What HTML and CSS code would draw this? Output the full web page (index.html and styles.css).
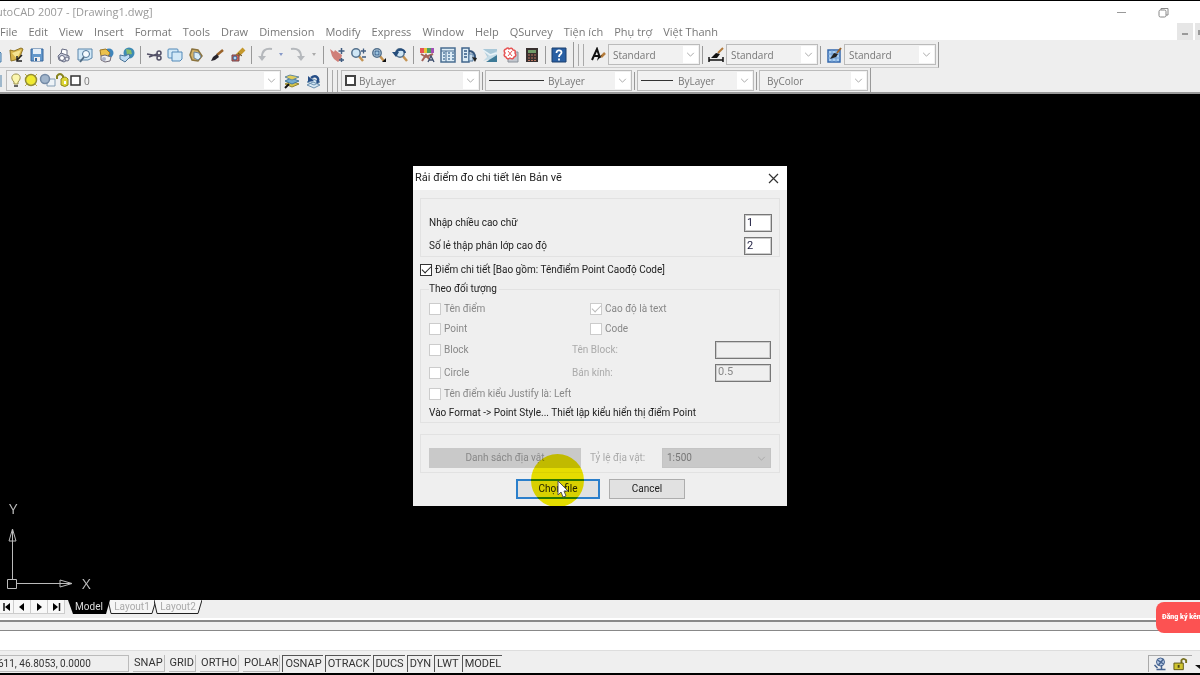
FILE: index.html
```html
<!DOCTYPE html>
<html lang="vi">
<head>
<meta charset="utf-8">
<title>AutoCAD 2007 - [Drawing1.dwg]</title>
<link rel="stylesheet" href="styles.css">
</head>
<body>
<svg class="defs" aria-hidden="true">
  <defs>
    <symbol id="chev" viewBox="0 0 10 6"><path d="M1 1l4 4 4-4" fill="none" stroke="#aaa" stroke-width="1.2"/></symbol>
    <symbol id="mag" viewBox="0 0 16 16"><path d="M8 8l5 6" stroke="#c49352" stroke-width="2.5"/><circle cx="6" cy="6" r="4.2" fill="#cfe6f5" stroke="#53708c" stroke-width="1.5"/></symbol>
  </defs>
</svg>
<header class="titlebar">
  <h1 class="app-title">AutoCAD 2007 - [Drawing1.dwg]</h1>
  <div class="win-controls">
    <button class="plain" aria-label="Minimize"><svg width="10" height="12" viewBox="0 0 10 12"><path d="M0 6.500h9" stroke="#999"/></svg></button>
    <button class="plain" aria-label="Restore"><svg width="11" height="11" viewBox="0 0 11 11" fill="none" stroke="#888"><rect x="1" y="3" width="7" height="7" rx="1.500"/><path d="M3 3V1.500h7V8H8"/></svg></button>
  </div>
</header>
<div class="menubar">
  <nav class="menu">
    <a href="#">File</a><a href="#">Edit</a><a href="#">View</a><a href="#">Insert</a><a href="#">Format</a><a href="#">Tools</a><a href="#">Draw</a><a href="#">Dimension</a><a href="#">Modify</a><a href="#">Express</a><a href="#">Window</a><a href="#">Help</a><a href="#">QSurvey</a><a href="#">Tiện ích</a><a href="#">Phụ trợ</a><a href="#">Việt Thanh</a>
  </nav>
  <div class="doc-controls">
    <button class="doc-btn" aria-label="Minimize drawing"><svg width="6" height="8"><rect width="6" height="2" y="5" fill="#999"/></svg></button>
    <button class="doc-btn cut" aria-label="Restore drawing"><svg width="6" height="8"><rect x="3" y="2" width="3" height="5" fill="#999"/></svg></button>
  </div>
</div>
<div class="toolbars">
  <div class="row">
    <div class="bar first">
      <button class="tool" aria-label="New"><svg viewBox="0 0 16 16"><path d="M2 3h9l3 3v9H2z" fill="#b9d9f2" stroke="#467aa8"/></svg></button>
      <button class="tool" aria-label="Open"><svg viewBox="0 0 16 16"><path d="M2 3l4 1 7-3 2 1-4 10-8 2z" fill="#d8b54b" stroke="#8f7325"/><path d="M4 6l9-3-4 9z" fill="#f5e391"/><path d="M9 13l5-5M9 9v5h5" stroke="#222" stroke-width="1.500" fill="none"/></svg></button>
      <button class="tool" aria-label="Save"><svg viewBox="0 0 16 16"><path d="M2 2h12v12H2z" fill="#6297cb" stroke="#35659b"/><path d="M4 2h8v5H4z" fill="#e5eff8"/><path d="M5 10h6v4H5z" fill="#eee"/><path d="M6 11h2v3H6z" fill="#35659b"/></svg></button>
      <span class="sep"></span>
      <button class="tool" aria-label="Plot"><svg viewBox="0 0 16 16" stroke="#676c83"><path d="M5 7l1-5 5 1v5" fill="#fff"/><path d="M2 9l3-3 8 3v3l-5 3-5-2z" fill="#cbcfdd"/><circle cx="6" cy="11" r="2.500" fill="#fff"/><circle cx="11" cy="12" r="2" fill="#e7e9f0"/></svg></button>
      <button class="tool" aria-label="Plot preview"><svg viewBox="0 0 16 16"><path d="M1 2h14v9l-4 2H1z" fill="#d2e9f8" stroke="#5b86ab"/><circle cx="9" cy="7" r="3.500" fill="#f5fbff" stroke="#4b7396"/><path d="M7 10l-4 5" stroke="#526d85" stroke-width="2"/></svg></button>
      <button class="tool" aria-label="Publish"><svg viewBox="0 0 16 16"><circle cx="11" cy="6" r="4.500" fill="#3f84ba"/><path d="M2 3l6-1 4 4-3 5-6-2z" fill="#ecc14c" stroke="#9c7725"/><path d="M3 9l4-1 6 2-1 4-5 1-4-2z" fill="#eee" stroke="#716b78"/><circle cx="6" cy="12" r="2" fill="#aab2c9"/></svg></button>
      <button class="tool" aria-label="Web"><svg viewBox="0 0 16 16"><circle cx="10" cy="6" r="5.500" fill="#3d8ab4"/><path d="M7 2l5 1 1 4-5 1z" fill="#88bb6a"/><path d="M1 8l5 1 4-2 1 3-5 5-5-3z" fill="#bcdaf2" stroke="#4b7396"/></svg></button>
      <span class="sep"></span>
      <button class="tool" aria-label="Cut"><svg viewBox="0 0 16 16" fill="none" stroke="#525066" stroke-width="1.500"><path d="M1 7l11 2M3 10l8-3"/><circle cx="13" cy="6" r="2"/><circle cx="13" cy="11" r="2"/></svg></button>
      <button class="tool" aria-label="Copy"><svg viewBox="0 0 16 16" fill="#d3e9f7" stroke="#5289b8"><rect x="1" y="2" width="10" height="9" rx="1"/><path d="M5 5h10v7l-2 2H5z"/></svg></button>
      <button class="tool" aria-label="Paste"><svg viewBox="0 0 16 16"><path d="M4 2l6 1 4 6-4 5-6-1-2-5z" fill="#d4b36a" stroke="#8b733e" stroke-width="1.500"/><path d="M6 5l5 1 2 4-3 3-4-2z" fill="#d8edfa" stroke="#6a839b"/></svg></button>
      <button class="tool" aria-label="Match properties"><svg viewBox="0 0 16 16"><path d="M8 8l6-5" stroke="#9a632a" stroke-width="2.500"/><path d="M2 14l2-4 4-3 2 3-4 3z" fill="#26232b"/></svg></button>
      <button class="tool" aria-label="Block editor"><svg viewBox="0 0 16 16"><path d="M7 9l7-7" stroke="#c5982c" stroke-width="4"/><path d="M8 6l4 3" stroke="#5c4a26"/><path d="M2 8h7v6H2z" fill="#dc6650" stroke="#70424b"/><circle cx="5" cy="11" r="2" fill="#b4d5ef" stroke="#315b91"/></svg></button>
      <span class="sep"></span>
      <button class="tool" aria-label="Undo"><svg viewBox="0 0 16 16"><path d="M15 2C8 1 5 4 5 10" fill="none" stroke="#b5b8bc" stroke-width="2"/><path d="M1 9h8l-4 5z" fill="#b5b8bc"/></svg></button>
      <button class="drop" aria-label="Undo list"><svg width="4" height="3"><path d="M0 0h4L2 3z" fill="#8799c9"/></svg></button>
      <button class="tool" aria-label="Redo"><svg viewBox="0 0 16 16"><path d="M1 2c7-1 10 2 10 8" fill="none" stroke="#b5b8bc" stroke-width="2"/><path d="M7 9h8l-4 5z" fill="#b5b8bc"/></svg></button>
      <button class="drop" aria-label="Redo list"><svg width="4" height="3"><path d="M0 0h4L2 3z" fill="#aaa"/></svg></button>
      <span class="sep"></span>
      <button class="tool" aria-label="Pan"><svg viewBox="0 0 16 16"><path d="M1 2l4 3 1-2 4 3 3 2-1 4-3 3-4-3-2-3z" fill="#cf7f79"/><path d="M12.500 1v6M9.500 4h6M12.500 11v4M10 13h5" stroke="#405c80" stroke-width="1.500"/></svg></button>
      <button class="tool" aria-label="Zoom realtime"><svg viewBox="0 0 16 16"><use href="#mag"/><path d="M11 4h5M13.500 1.500v5M12 10h4" stroke="#405c80" stroke-width="1.300"/></svg></button>
      <button class="tool" aria-label="Zoom window"><svg viewBox="0 0 16 16"><use href="#mag"/><path d="M4 4h4v4H4z" fill="#9bc4e0" stroke="#355b86"/><path d="M15 11v4h-4z" fill="#111"/></svg></button>
      <button class="tool" aria-label="Zoom previous"><svg viewBox="0 0 16 16"><use href="#mag" x="2"/><path d="M4 7c1-6 9-5 9-1" fill="none" stroke="#254d7c" stroke-width="2"/><path d="M0 5h7l-3 5z" fill="#254d7c"/></svg></button>
      <span class="sep"></span>
      <button class="tool" aria-label="Properties"><svg viewBox="0 0 16 16"><path d="M1 1h4v5H1z" fill="#e65454"/><path d="M5 1h3v5H5z" fill="#e7c735"/><path d="M8 1h4v5H8z" fill="#4fa064"/><path d="M12 1h3v5h-3z" fill="#a34fb5"/><path d="M2 7l5 3 7-3M3 14l4-6 3 4" fill="none" stroke="#a5645a" stroke-width="2"/><path d="M9 15l3-6 3 6M10 13h4" fill="none" stroke="#3c4d6d" stroke-width="1.300"/></svg></button>
      <button class="tool" aria-label="DesignCenter"><svg viewBox="0 0 16 16"><path d="M1 1h14v14H1z" fill="#dcecf6" stroke="#496d91" stroke-width="1.500"/><path d="M1 4h14M6 4v11" stroke="#496d91"/><path d="M3 6h2M3 9h2M3 12h2M8 6h2M12 6h2M8 9h2M12 9h2M8 12h2M12 12h2" stroke="#557da3" stroke-width="1.500"/></svg></button>
      <button class="tool" aria-label="Tool palettes"><svg viewBox="0 0 16 16"><path d="M1 1h7v14H1z" fill="#dcecf6" stroke="#41658c" stroke-width="1.500"/><path d="M3 4h3M3 7h3M3 10h3" stroke="#355b86" stroke-width="1.500"/><path d="M8 4c5 0 6 3 6 7" fill="none" stroke="#35567c" stroke-width="2"/><path d="M8 7h4v7H8z" fill="#c9dcec" stroke="#557da3"/><path d="M11 10l5 1-2 4z" fill="#222"/></svg></button>
      <button class="tool" aria-label="Sheet set"><svg viewBox="0 0 16 16"><path d="M1 2h14v13H8z" fill="#a9c8d8"/><path d="M1 3l8 4 6-3v6l-7 2-7 2 5-5z" fill="#c5dce7"/><path d="M1 3l7 5 7-2" fill="none" stroke="#e9f3f8" stroke-width="1.500"/><path d="M4 15l11-7v7z" fill="#3d7a97"/></svg></button>
      <button class="tool" aria-label="Markup"><svg viewBox="0 0 16 16"><path d="M5 5h10v10H5z" fill="#c2c7cf" stroke="#8b929b"/><path d="M3 2q2-2 3 0 3-2 4 1 3 0 2 3 2 3-1 4-1 3-4 1-3 2-4-1-3-1-1-4-2-3 1-4z" fill="#fff" stroke="#e65555" stroke-width="1.500"/><path d="M5 4l4 5M9 4L5 9" stroke="#e65555"/></svg></button>
      <button class="tool" aria-label="Calculator"><svg viewBox="0 0 16 16"><path d="M2 1h12v14H2z" fill="#38302f"/><path d="M4 3h8v3H4z" fill="#719b69"/><path d="M4 8h8M4 11h8M4 13.500h8" stroke="#b97560" stroke-dasharray="2 1"/></svg></button>
      <span class="sep"></span>
      <button class="tool" aria-label="Help"><svg viewBox="0 0 16 16"><path d="M1 1h14v14H1z" fill="#295fa3" stroke="#1c416f"/><path d="M5.500 6c0-4 5-3 5-.5C10.500 7.500 8 7 8 10M8 11.500v2" fill="none" stroke="#fff" stroke-width="1.800"/></svg></button>
    </div>
    <div class="bar styles">
      <span class="grip"></span>
      <button class="tool" aria-label="Text style"><svg viewBox="0 0 16 16"><path d="M2 13L7 2l3 9M4 9h6" fill="none" stroke="#111" stroke-width="2"/><path d="M15 6l-4 4" stroke="#b37a3a" stroke-width="2.500"/><path d="M12 8l-5 6 1-4z" fill="#111"/></svg></button>
      <span class="combo std"><select aria-label="Text style"><option>Standard</option></select><svg class="arrow"><use href="#chev"/></svg></span>
      <span class="sep"></span>
      <button class="tool" aria-label="Dimension style"><svg viewBox="0 0 16 16"><path d="M1 10v5M15 10v5M1 13h14" stroke="#111" stroke-width="1.500"/><path d="M10 6l5-5" stroke="#b37a3a" stroke-width="2"/><path d="M3 11l5-5 4 1-3 4z" fill="#111"/></svg></button>
      <span class="combo std"><select aria-label="Dimension style"><option>Standard</option></select><svg class="arrow"><use href="#chev"/></svg></span>
      <span class="sep"></span>
      <button class="tool" aria-label="Table style"><svg viewBox="0 0 16 16"><path d="M2 3h12v12H2z" fill="#a9cdf0" stroke="#3468ad" stroke-width="1.500"/><path d="M2 7h12M2 11h12M6 3v12M10 3v12" stroke="#6f9cd2"/><path d="M11 6l4-5" stroke="#9a632a" stroke-width="2"/><path d="M4 12l4-6 4 1-2 3z" fill="#222"/></svg></button>
      <span class="combo std"><select aria-label="Table style"><option>Standard</option></select><svg class="arrow"><use href="#chev"/></svg></span>
    </div>
  </div>
  <div class="row">
    <div class="bar layers">
      <span class="edge"></span>
      <span class="combo layer">
        <select aria-label="Layer"><option>0</option></select>
        <svg class="layer-icons" viewBox="0 0 72 16">
          <path d="M5 10C1 6 3 2 7 2s6 4 2 8v2H5z" fill="#fbf6ae" stroke="#9b914c"/><path d="M5 14h4" stroke="#666" stroke-width="2"/>
          <circle cx="22" cy="8" r="5.500" fill="#f0ea31" stroke="#938d38" stroke-width="1.500"/><path d="M16 2l2 2M28 2l-2 2M16 14l2-2M28 14l-2-2" stroke="#b8ae45"/>
          <path d="M38 7h8v7h-8z" fill="#eef3f7" stroke="#849db4"/><circle cx="36" cy="7" r="4.500" fill="#a1b5cb" stroke="#748aa5" stroke-width="1.500"/>
          <path d="M48 7V4q3-4 6 0v4" fill="none" stroke="#87831e" stroke-width="2"/><path d="M52 7q4-4 7 0v6q-3 3-7 0z" fill="#ded735" stroke="#8d871f"/><path d="M55 9h2v3h-2z" fill="#fff"/>
          <path d="M62 4h9v9h-9z" fill="#fff" stroke="#333" stroke-width="1.500"/>
        </svg>
        <svg class="arrow"><use href="#chev"/></svg>
      </span>
      <button class="tool" aria-label="Layer properties"><svg viewBox="0 0 16 16"><path d="M1 11l6-3 8 3-7 3z" fill="#d6c449" stroke="#918331"/><path d="M1 8l6-3 8 3-7 3z" fill="#73abd0" stroke="#467a9e"/><path d="M1 4l5-2 9 2-7 3z" fill="#e1cd58" stroke="#648aa3"/><path d="M1 15l4-4" stroke="#111" stroke-width="2"/></svg></button>
      <button class="tool" aria-label="Layer previous"><svg viewBox="0 0 16 16"><path d="M2 12l6-3 7 3-6 3zM2 9l6-3 7 3-6 3z" fill="#d6e8f5" stroke="#6d91b0"/><path d="M12 10c3-5-1-9-6-5" fill="none" stroke="#254d86" stroke-width="2.500"/><path d="M3 3v6l6-1z" fill="#254d86"/></svg></button>
    </div>
    <div class="bar props">
      <span class="grip"></span>
      <span class="combo color"><select aria-label="Color"><option>ByLayer</option></select><i class="swatch"></i><svg class="arrow"><use href="#chev"/></svg></span>
      <span class="sep"></span>
      <span class="combo ltype"><select aria-label="Linetype"><option>ByLayer</option></select><i class="line"></i><svg class="arrow"><use href="#chev"/></svg></span>
      <span class="sep"></span>
      <span class="combo lweight"><select aria-label="Lineweight"><option>ByLayer</option></select><i class="line"></i><svg class="arrow"><use href="#chev"/></svg></span>
      <span class="sep"></span>
      <span class="combo plot"><select aria-label="Plot style"><option>ByColor</option></select><svg class="arrow"><use href="#chev"/></svg></span>
    </div>
  </div>
</div>
<main class="canvas">
  <svg class="ucs" width="100" height="102" viewBox="0 -6 100 102" fill="none" stroke="#bbb">
    <path d="M7.500 75.500h9v9h-9zM12.500 75V26M9 37l3.500-12L16 37zM17 79.500h54M60 76l12 3.500L60 83z"/>
    <path d="M12.500 30v6M62 79.500h6"/>
    <text x="9" y="10" class="axis">Y</text><text x="82" y="85" class="axis">X</text>
  </svg>
  <form class="dialog" role="dialog" aria-labelledby="dlg-title">
    <div class="dlg-head">
      <h2 id="dlg-title" class="dlg-title">Rải điểm đo chi tiết lên Bản vẽ</h2>
      <button type="button" class="plain" aria-label="Close"><svg width="11" height="11" viewBox="0 0 11 11"><path d="M1 1l9 9M10 1l-9 9" stroke="#333" stroke-width="1.200"/></svg></button>
    </div>
    <div class="dlg-body">
      <div class="group sizes">
        <div class="field"><label for="h">Nhập chiều cao chữ</label><input id="h" class="box short" value="1"></div>
        <div class="field"><label for="d">Số lẻ thập phân lớp cao độ</label><input id="d" class="box short" value="2"></div>
      </div>
      <label class="check main"><input type="checkbox" checked>Điểm chi tiết [Bao gồm: Tênđiểm Point Caođộ Code]</label>
      <fieldset class="group objects">
        <legend>Theo đối tượng</legend>
        <div class="options">
          <label class="check"><input type="checkbox" disabled>Tên điểm</label>
          <label class="check inset"><input type="checkbox" checked disabled>Cao độ là text</label>
          <label class="check"><input type="checkbox" disabled>Point</label>
          <label class="check inset"><input type="checkbox" disabled>Code</label>
          <label class="check"><input type="checkbox" disabled>Block</label>
          <div class="field off"><label for="b">Tên Block:</label><input id="b" class="box" disabled></div>
          <label class="check"><input type="checkbox" disabled>Circle</label>
          <div class="field off"><label for="r">Bán kính:</label><input id="r" class="box" value="0.5" disabled></div>
          <label class="check wide"><input type="checkbox" disabled>Tên điểm kiểu Justify là: Left</label>
          <p class="hint wide">Vào Format -&gt; Point Style... Thiết lập kiểu hiển thị điểm Point</p>
        </div>
      </fieldset>
      <div class="group features">
        <button type="button" class="btn list" disabled>Danh sách địa vật</button>
        <label class="ratio-label" for="ratio">Tỷ lệ địa vật:</label>
        <span class="combo ratio"><select id="ratio" disabled><option>1:500</option></select><svg class="arrow"><use href="#chev"/></svg></span>
      </div>
      <div class="actions">
        <span class="pointed">
          <button type="button" class="btn choose">Chọn file</button>
          <i class="halo"></i>
          <svg class="cursor" width="12" height="18" viewBox="0 0 12 18"><path d="M1 1v14l3-3 2 5 3-1-2-5h4z" fill="#fff" stroke="#555"/></svg>
        </span>
        <button type="button" class="btn cancel">Cancel</button>
      </div>
    </div>
  </form>
</main>
<footer class="bottom">
  <div class="tabs">
    <button class="nav" aria-label="First"><svg viewBox="0 0 10 10"><path d="M2 1v8" stroke="#111" stroke-width="1.500"/><path d="M8 1v8L3 5z"/></svg></button>
    <button class="nav" aria-label="Previous"><svg viewBox="0 0 10 10"><path d="M7 1v8L2 5z"/></svg></button>
    <button class="nav" aria-label="Next"><svg viewBox="0 0 10 10"><path d="M3 1v8l5-4z"/></svg></button>
    <button class="nav" aria-label="Last"><svg viewBox="0 0 10 10"><path d="M2 1v8l5-4z"/><path d="M8.500 1v8" stroke="#111" stroke-width="1.500"/></svg></button>
    <button class="tab model"><svg viewBox="0 0 42 14" preserveAspectRatio="none"><path d="M0 0h42l-4 14H5z" fill="#000"/></svg><span>Model</span></button>
    <button class="tab"><svg viewBox="0 0 48 14" preserveAspectRatio="none"><path d="M0 0l3 13.500h41L48 0" fill="#f6f6f6" stroke="#222"/></svg><span>Layout1</span></button>
    <button class="tab"><svg viewBox="0 0 48 14" preserveAspectRatio="none"><path d="M0 0l3 13.500h41L48 0" fill="#f6f6f6" stroke="#222"/></svg><span>Layout2</span></button>
  </div>
  <div class="splitter"></div>
  <input class="command" aria-label="Command line">
  <div class="status">
    <output class="coords">611, 46.8053, 0.0000</output>
    <div class="modes">
      <div class="mode-set"><button class="mode">SNAP</button><button class="mode">GRID</button><button class="mode">ORTHO</button><button class="mode">POLAR</button></div>
      <div class="mode-set on"><button class="mode">OSNAP</button><button class="mode">OTRACK</button><button class="mode">DUCS</button><button class="mode">DYN</button><button class="mode">LWT</button><button class="mode">MODEL</button></div>
    </div>
    <div class="tray">
      <svg viewBox="0 0 14 14"><circle cx="7" cy="5" r="4" fill="#b9cbe6" stroke="#45628f"/><path d="M4 3l6 4M10 2L5 8M8 8v4M3 12.500h9M1 8l3 3" stroke="#45628f" stroke-width="1.500"/></svg>
      <svg viewBox="0 0 16 14"><path d="M9 7V3q2-3 5 0v3" fill="none" stroke="#77701d" stroke-width="2"/><path d="M1 6h10v7H1z" fill="#cfc42f" stroke="#5d5716"/><path d="M5 8h2v3H5z" fill="#4b4614"/></svg>
    </div>
    <button class="plain more" aria-label="Status menu"><svg width="5" height="4"><path d="M0 0h5v4z" fill="#111"/></svg></button>
  </div>
  <div class="badge">Đăng ký kênh</div>
</footer>
</body>
</html>
```
FILE: styles.css
```css
* { box-sizing: border-box; }
body {
  margin: 0;
  min-height: 100vh;
  display: flex;
  flex-direction: column;
  overflow: hidden;
  background: #000;
  border-top: 1px solid #000;
  border-bottom: 2px solid #000;
  font: 11px/14px "Open Sans", "Noto Sans", sans-serif;
  color: #777;
}
button, input, select { font: inherit; color: inherit; margin: 0; padding: 0; border: 0; background: none; border-radius: 0; }
h1, h2, p { margin: 0; font-weight: normal; font-size: inherit; }
.defs { position: absolute; width: 0; height: 0; }
.plain { display: flex; }

.titlebar { display: flex; justify-content: space-between; align-items: center; height: 22px; background: #fff; white-space: nowrap; }
.app-title { margin-left: -11px; color: #999; }
.win-controls { display: flex; align-items: center; gap: 31px; padding-right: 31px; }
.menubar { display: flex; justify-content: space-between; height: 17px; background: #fff; }
.menu { display: flex; gap: 11px; align-items: center; white-space: nowrap; }
.menu a { color: inherit; text-decoration: none; }
.doc-controls { display: flex; gap: 2px; }
.doc-btn { display: flex; justify-content: center; align-items: center; width: 16px; background: #e6e6e6; }
.doc-btn.cut { width: 5px; }

.toolbars { background: #eee; height: 54px; padding-top: 2px; border-bottom: 2px solid #999; overflow: hidden; }
.row { display: flex; height: 26px; }
.bar { display: flex; align-items: center; border-right: 1px solid #999; border-bottom: 1px solid #ccc; flex: none; }
.bar.first { margin-left: -16px; padding-right: 4px; }
.bar.styles, .bar.props { padding-right: 2px; }
.tool { flex: none; display: flex; justify-content: center; width: 21px; }
.tool svg { width: 16px; height: 16px; }
.drop { flex: none; display: flex; justify-content: center; width: 12px; }
.sep { flex: none; width: 6px; height: 18px; background: linear-gradient(#999, #999) center / 1px 100% no-repeat; }
.styles .sep, .props .sep { width: 5px; }
.grip { flex: none; width: 6px; height: 22px; margin: 0 3px 0 4px; border: 1px solid #aaa; border-width: 0 1px; }
.edge { width: 2px; height: 12px; margin-right: 4px; background: #9fb8cc; }
.layers { padding-right: 4px; }

.combo { position: relative; display: flex; height: 21px; flex: none; }
.combo select { appearance: none; width: 100%; height: 100%; padding: 0 4px; border: 1px solid #bbb; background: #f1f1f1; font-size: 10px; opacity: 1; }
.arrow { position: absolute; top: 2px; bottom: 2px; right: 2px; width: 15px; height: 17px; padding: 6px 3px; background: #fff; pointer-events: none; }
.combo.std { width: 92px; }
.combo.layer { width: 275px; }
.combo.layer select { padding-left: 77px; }
.layer-icons { position: absolute; left: 3px; top: 2px; width: 72px; height: 16px; pointer-events: none; }
.combo.color { width: 139px; }
.combo.color select { padding-left: 17px; }
.swatch { position: absolute; left: 4px; top: 5px; width: 11px; height: 11px; border: 2px solid #444; background: #fff; }
.line { position: absolute; top: 10px; left: 4px; height: 1px; background: #333; }
.combo.ltype { width: 147px; }
.combo.ltype select { padding-left: 62px; }
.ltype .line { width: 55px; }
.combo.lweight { width: 117px; }
.combo.lweight select { padding-left: 40px; }
.lweight .line { width: 32px; }
.combo.plot { width: 109px; }
.combo.plot select { padding-left: 7px; }

.canvas { position: relative; flex: 1; display: grid; place-items: center; padding-bottom: 22px; background: #000; }
.ucs { position: absolute; left: 0; bottom: 0; }
.axis { font-size: 15px; fill: #bbb; stroke: none; }

.dialog { position: relative; width: 374px; background: #efefef; color: #222; font: 10px/14px Roboto, "Noto Sans", sans-serif; white-space: nowrap; overflow: hidden; }
.dlg-head { display: flex; justify-content: space-between; align-items: center; height: 24px; padding: 0 8px 0 2px; background: #fff; }
.dlg-title { font-size: 11px; }
.dlg-body { padding: 8px 7px 7px; }
.group { margin: 0; padding: 0 8px; border: 1px solid #e2e2e2; min-width: 0; }
.sizes { display: grid; gap: 5px; padding: 15px 7px 1px 8px; }
.field { display: flex; align-items: center; justify-content: space-between; height: 18px; }
.box { width: 56px; height: 18px; padding: 0 2px 2px; border: 1px solid #777; background: #fff; color: #224; outline: 1px solid #ccc; outline-offset: -2px; font-size: 11px; }
.box.short { width: 28px; }
.box:disabled { background: #efefef; color: #888; }
.check { display: flex; align-items: center; gap: 3px; color: #888; }
.check input { appearance: none; flex: none; width: 12px; height: 12px; border: 1px solid #ccc; background: #fff; }
.check input:checked::before { content: ""; display: block; width: 8px; height: 4px; margin: 1px; border: solid #bbb; border-width: 0 0 1px 1px; transform: rotate(-45deg); }
.check.main { color: #222; margin: 6px 0 5px; }
.main input { border-color: #333; }
.main input:checked::before { border-color: #222; }
.objects legend { padding: 0 2px 0 0; }
.options { display: grid; grid-template-columns: 143px 1fr; grid-template-rows: 20px 19px 23px 23px 20px 18px; align-items: center; margin-top: 3px; }
.inset { padding-left: 18px; }
.wide { grid-column: 1 / -1; }
.off { color: #aaa; }
.features { display: flex; align-items: center; margin-top: 11px; padding-top: 8px; height: 39px; }
.btn { height: 20px; border: 1px solid #adadad; background: #e1e1e1; }
.list { width: 152px; border: 0; background: #c9c9c9; color: #888; }
.ratio-label { margin-left: 9px; color: #aaa; }
.combo.ratio { width: 109px; height: 20px; margin-left: auto; }
.combo.ratio select { background: #c9c9c9; border-color: #c4c4c4; color: #777; }
.ratio .arrow { background: none; }
.actions { display: flex; gap: 9px; margin-top: 6px; padding-left: 96px; }
.pointed { position: relative; display: flex; }
.choose { width: 84px; border: 2px solid #2b7fcb; }
.cancel { width: 76px; }
.halo { position: absolute; left: 15px; top: -25px; width: 53px; height: 53px; border-radius: 50%; background: #f5ec00; mix-blend-mode: multiply; pointer-events: none; }
.cursor { position: absolute; left: 41px; top: 1px; pointer-events: none; }

.bottom { position: relative; background: #efefef; font-family: Roboto, "Noto Sans", sans-serif; white-space: nowrap; overflow: hidden; }
.tabs { display: flex; height: 20px; align-items: flex-start; border-bottom: 2px solid #fff; font-size: 10px; }
.nav { display: flex; justify-content: center; align-items: center; width: 17px; height: 14px; border: 1px solid #ccc; border-width: 0 1px 1px 0; background: #f8f8f8; }
.nav:first-child { width: 14px; }
.nav svg { width: 10px; height: 10px; }
.nav:nth-child(4) { margin-right: 3px; }
.tab { position: relative; display: grid; place-items: center; width: 48px; height: 14px; margin-left: -2px; color: #aaa; }
.tab svg, .tab span { grid-area: 1 / 1; }
.tab svg { width: 100%; height: 14px; }
.model { z-index: 1; width: 42px; margin-left: 0; color: #ddd; }
.splitter { height: 11px; border: 2px solid #888; border-width: 2px 0 1px; background: #efefef; }
.command { display: block; width: 100%; height: 19px; background: #fff; }
.status { display: flex; align-items: center; height: 23px; padding-top: 3px; border-top: 1px solid #ddd; color: #333; }
.coords { width: 129px; height: 17px; line-height: 16px; margin-right: 4px; border: 1px solid #bbb; border-left: 0; overflow: hidden; font-size: 10px; text-indent: -2px; }
.modes { display: flex; gap: 2px; }
.mode-set { display: flex; gap: 4px; }
.mode-set.on { gap: 2px; }
.mode { height: 17px; padding: 0 1px; border: 1px solid #bbb; border-width: 0 1px 1px 0; }
.on .mode { border: 1px solid #555; border-width: 1px 0 0 1px; padding: 0 1px 0 2px; }
.tray { display: flex; gap: 5px; align-items: center; height: 17px; margin-left: auto; padding: 0 4px; border: 1px solid #aaa; border-width: 1px 0 0 1px; }
.tray svg { width: 15px; height: 14px; }
.more { margin: 6px 0 0 3px; }
.badge { position: absolute; right: 0; top: 2px; width: 44px; height: 31px; padding-left: 6px; border-radius: 8px 0 0 8px; background: #fc5252; color: #fff; font-size: 7px; font-weight: 900; line-height: 31px; overflow: hidden; }
```
